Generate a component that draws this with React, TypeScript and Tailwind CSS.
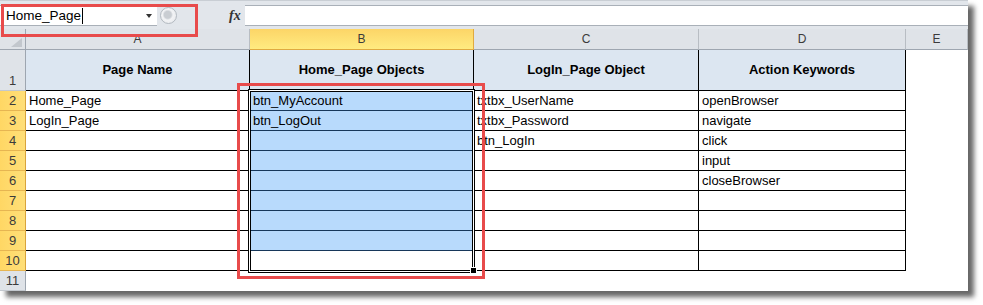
const rows: string[][] = [
  ["Home_Page", "btn_MyAccount", "txtbx_UserName", "openBrowser"],
  ["LogIn_Page", "btn_LogOut", "txtbx_Password", "navigate"],
  ["", "", "btn_LogIn", "click"],
  ["", "", "", "input"],
  ["", "", "", "closeBrowser"],
  ["", "", "", ""],
  ["", "", "", ""],
  ["", "", "", ""],
  ["", "", "", ""],
];

const headers = ["Page Name", "Home_Page Objects", "LogIn_Page Object", "Action Keywords"];

function RowHead({ n, selected, tall }: { n: number; selected: boolean; tall?: boolean }) {
  return (
    <div
      className={
        "flex justify-center border-r border-b text-[13px] leading-[16px] text-[#3b3b3b] " +
        (tall ? "items-end pb-[1px] " : "items-center ") +
        (selected
          ? "bg-gradient-to-r from-[#ffd764] to-[#ffdf78] border-r-[#d9a43c] border-b-[#e6b552]"
          : "bg-[#dfe3e8] border-r-[#9ea6b0] border-b-[#c3c8ce]")
      }
    >
      {n}
    </div>
  );
}

function ColHead({ label, selected }: { label: string; selected?: boolean }) {
  return (
    <div
      className={
        "flex items-center justify-center border-r border-b text-[12px] text-[#3b3b3b] " +
        (selected
          ? "bg-gradient-to-b from-[#fcd567] to-[#ffeb80] border-r-[#e0aa40] border-b-[#e0aa40]"
          : "bg-[#dfe3e8] border-r-[#b8bdc3] border-b-[#9ea6b0]")
      }
    >
      {label}
    </div>
  );
}

export default function App() {
  return (
    <div className="w-[983px] h-[305px] bg-white font-['Liberation_Sans',Arial,sans-serif]">
      <div className="relative w-[968px] h-[291px] bg-white shadow-[6px_6px_5px_rgba(0,0,0,0.6)]">
        {/* Formula bar */}
        <div className="h-[29px] bg-[#e2e6eb] pt-[4px] border-t border-[#c9ced4]">
          <div className="flex h-[21px]">
            <div className="w-[157px] bg-white border-y border-[#a9b0b8] flex items-center pl-[6px] pr-[5px]">
              <span className="text-[13.5px] leading-[18px] text-black">Home_Page</span>
              <span className="w-[1px] h-[16px] bg-black ml-[1px]" />
              <span className="ml-auto w-0 h-0 border-l-[3px] border-r-[3px] border-t-[4px] border-l-transparent border-r-transparent border-t-[#333]" />
            </div>
            <div className="w-[88px] flex items-center">
              <div className="ml-[3px] w-[17px] h-[17px] rounded-full border border-[#b3b9c0] bg-[radial-gradient(circle_at_45%_45%,#c9cdd2_0,#c9cdd2_30%,#f2f3f5_45%,#e4e7ea_100%)]" />
              <span className="ml-[52px] font-['Liberation_Serif',serif] italic font-bold text-[14px] text-[#333]">
                fx
              </span>
            </div>
            <div className="flex-1 bg-white border-y border-[#a9b0b8]" />
          </div>
        </div>

        {/* Sheet grid */}
        <div className="grid grid-cols-[26px_224px_224px_225px_207px_62px] grid-rows-[21px_41px_repeat(10,20px)]">
          {/* corner */}
          <div className="bg-[#dfe3e8] border-r border-b border-r-[#9ea6b0] border-b-[#9ea6b0] flex items-end justify-end pr-[3px] pb-[2px]">
            <svg width="11" height="9" viewBox="0 0 11 9">
              <polygon points="11,0 11,9 0,9" fill="#c2c7cd" />
            </svg>
          </div>
          <ColHead label="A" />
          <ColHead label="B" selected />
          <ColHead label="C" />
          <ColHead label="D" />
          <ColHead label="E" />

          {/* row 1 */}
          <RowHead n={1} selected={false} tall />
          {headers.map((h) => (
            <div
              key={h}
              className="bg-[#dce6f1] border-r border-b border-black flex items-center justify-center text-[13px] font-bold text-black"
            >
              {h}
            </div>
          ))}
          <div className="bg-white" />

          {/* rows 2-10 */}
          {rows.map((r, i) => {
            const n = i + 2;
            return [
              <RowHead key={"h" + n} n={n} selected />,
              ...r.map((v, ci) => (
                <div
                  key={n + "-" + ci}
                  className={
                    "border-r border-b border-black flex items-end pl-[3px] pb-[1px] text-[13px] leading-[16px] text-black whitespace-nowrap overflow-hidden " +
                    (ci === 1 && n <= 9 ? "bg-[#b8dafc] border-b-[#17375a]" : "bg-white")
                  }
                >
                  {v}
                </div>
              )),
              <div key={"e" + n} className="bg-white" />,
            ];
          })}

          {/* row 11 */}
          <RowHead n={11} selected={false} />
          <div className="bg-white" />
          <div className="bg-white" />
          <div className="bg-white" />
          <div className="bg-white" />
          <div className="bg-white" />
        </div>

        {/* selection border B2:B10 */}
        <div className="absolute left-[248px] top-[89px] w-[227px] h-[184px] border border-black shadow-[inset_0_0_0_1px_white,inset_0_0_0_2px_black] pointer-events-none" />
        <div className="absolute left-[470px] top-[267px] w-[7px] h-[7px] bg-black border border-white" />

        {/* red annotation boxes */}
        <div className="absolute left-[1px] top-[4px] w-[197px] h-[33px] border-[3px] border-[#e84b4b] pointer-events-none" />
        <div className="absolute left-[237px] top-[83px] w-[248px] h-[196px] border-[3px] border-[#e84b4b] pointer-events-none" />
      </div>
    </div>
  );
}
